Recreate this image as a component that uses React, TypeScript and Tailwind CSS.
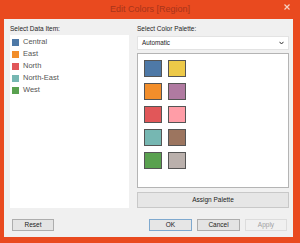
import React from "react";

const items = [
  { name: "Central", color: "#4e79a7" },
  { name: "East", color: "#f28e2b" },
  { name: "North", color: "#e15759" },
  { name: "North-East", color: "#76b7b2" },
  { name: "West", color: "#59a14f" },
];

const palette = [
  "#4e79a7",
  "#edc948",
  "#f28e2b",
  "#b07aa1",
  "#e15759",
  "#ff9da7",
  "#76b7b2",
  "#9c755f",
  "#59a14f",
  "#bab0ac",
];

function Button({
  label,
  className = "",
}: {
  label: string;
  className?: string;
}) {
  return (
    <div
      className={`flex h-[12px] items-center justify-center border text-[6.5px] leading-none ${className}`}
    >
      {label}
    </div>
  );
}

export default function App() {
  return (
    <div className="flex h-[243px] w-[300px] flex-col overflow-hidden bg-[#e94a1f] font-['Liberation_Sans',Arial,sans-serif]">
      {/* title bar */}
      <div className="relative flex h-[19px] shrink-0 items-center justify-center">
        <span className="text-[9px] leading-none text-[#a8341a]">Edit Colors [Region]</span>
        <svg
          className="absolute right-[10px] top-[4px]"
          width="6"
          height="6"
          viewBox="0 0 6 6"
        >
          <path d="M0.5 0.5L5.5 5.5M5.5 0.5L0.5 5.5" stroke="#f6d2c6" strokeWidth="1.2" />
        </svg>
      </div>

      {/* body */}
      <div className="ml-[4px] mr-[7px] flex h-[218px] flex-col bg-[#f0f0f0] pl-[6px] pr-[4px] pt-[4px]">
        <div className="flex gap-[8px]">
          {/* left column */}
          <div className="flex w-[119px] flex-col">
            <div className="h-[12px] text-[6.5px] leading-[12px] text-[#1e1e1e]">Select Data Item:</div>
            <div className="h-[173px] bg-white pt-[1px]">
              {items.map((it) => (
                <div key={it.name} className="flex h-[12px] items-center gap-[4px] pl-[2px]">
                  <div className="h-[7px] w-[7px]" style={{ backgroundColor: it.color }} />
                  <span className="text-[7.5px] leading-none text-[#555]">{it.name}</span>
                </div>
              ))}
            </div>
          </div>

          {/* right column */}
          <div className="flex w-[152px] flex-col">
            <div className="h-[13px] text-[6.5px] leading-[12px] text-[#1e1e1e]">Select Color Palette:</div>
            <div className="flex h-[14px] items-center justify-between border border-[#e3e3e3] bg-white pl-[4px] pr-[4px]">
              <span className="text-[6.3px] leading-none text-[#222]">Automatic</span>
              <svg width="5" height="4" viewBox="0 0 5 4">
                <path d="M0.5 0.8L2.5 3L4.5 0.8" stroke="#333" strokeWidth="1" fill="none" />
              </svg>
            </div>
            <div className="mt-[3px] h-[135px] border border-[#b4b4b4] bg-white pl-[6px] pt-[6px]">
              <div className="grid w-fit grid-cols-[18px_18px] gap-x-[6px] gap-y-[6px]">
                {palette.map((c, i) => (
                  <div
                    key={i}
                    className="h-[17px] w-[18px] border border-[#555]"
                    style={{ backgroundColor: c }}
                  />
                ))}
              </div>
            </div>
            <Button
              label="Assign Palette"
              className="mt-[4px] h-[16px] border-[#c8c8c8] bg-[#e6e6e6] text-[#222]"
            />
          </div>
        </div>

        {/* bottom buttons */}
        <div className="mt-[11px] flex">
          <Button label="Reset" className="ml-[2px] w-[42px] border-[#adadad] bg-[#e4e4e4] text-[#222]" />
          <div className="ml-auto flex gap-[5px] pr-[2px]">
            <Button label="OK" className="w-[43px] border-[#7fa9cf] bg-[#e6e6e6] text-[#222]" />
            <Button label="Cancel" className="w-[43px] border-[#adadad] bg-[#e4e4e4] text-[#222]" />
            <Button label="Apply" className="w-[42px] border-[#dcdcdc] bg-[#f0f0f0] text-[#a0a0a0]" />
          </div>
        </div>
      </div>
    </div>
  );
}
